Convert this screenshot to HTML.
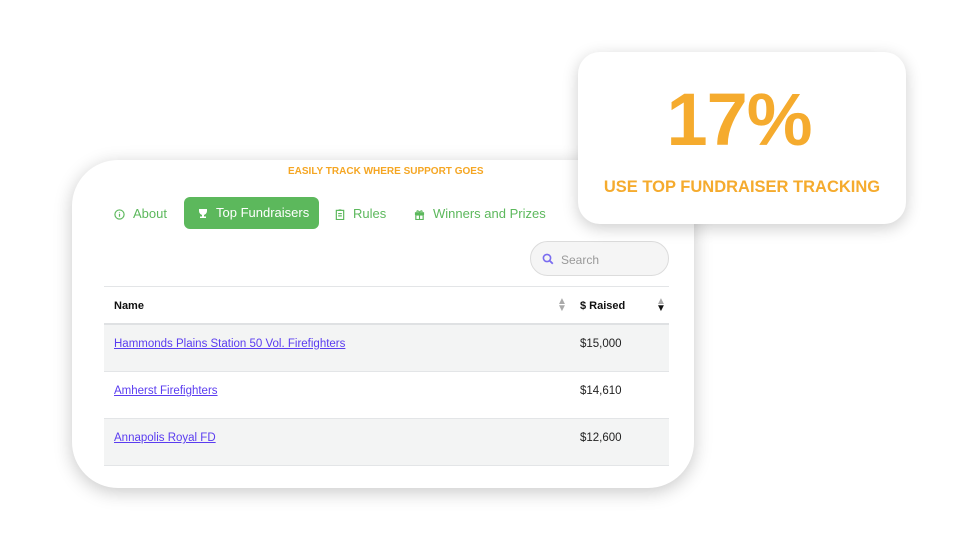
<!DOCTYPE html>
<html><head><meta charset="utf-8"><style>
*{margin:0;padding:0;box-sizing:border-box}
body{width:960px;height:559px;background:#fff;position:relative;overflow:hidden;font-family:"Liberation Sans",sans-serif}
.main{position:absolute;left:72px;top:160px;width:622px;height:328px;background:#fff;border-radius:46px;box-shadow:0 4px 18px rgba(0,0,0,.22)}
.stat{position:absolute;left:578px;top:52px;width:328px;height:172px;background:#fff;border-radius:22px;box-shadow:0 4px 16px rgba(0,0,0,.2)}
.abs{position:absolute;white-space:nowrap}
.tab{position:absolute;top:198px;height:32px;line-height:32px;color:#5cb85c;font-size:13px}
.tab svg{vertical-align:-2px;margin-right:8px}
.row{position:absolute;left:104px;width:565px;height:47px;border-bottom:1px solid #e3e5e7}
.row a{position:absolute;left:10px;top:13px;color:#5a3cf0;font-size:11.5px;text-decoration:underline}
.row span{position:absolute;left:476px;top:13px;color:#222;font-size:11.5px}
</style></head><body>
<div class="main"></div>
<div class="abs" style="left:288px;top:166px;color:#f5a623;font-size:10px;font-weight:bold">EASILY TRACK WHERE SUPPORT GOES</div>
<div class="tab" style="left:114px"><svg width="11" height="11" viewBox="0 0 12 12"><circle cx="6" cy="6" r="5" fill="none" stroke="#5cb85c" stroke-width="1.3"/><path d="M6 5.2v3.2M6 3.3v.6" stroke="#5cb85c" stroke-width="1.3"/></svg>About</div>
<div class="tab" style="left:184px;top:197px;width:135px;background:#5cb85c;color:#fff;border-radius:6px;padding-left:14px"><svg width="10" height="11" viewBox="0 0 10 11"><path d="M1 1h8v2a4 4 0 0 1-8 0z M4 6.5h2v2h2v1.5h-6v-1.5h2z" fill="#fff"/></svg>Top Fundraisers</div>
<div class="tab" style="left:335px"><svg width="10" height="11" viewBox="0 0 10 12"><rect x="1" y="1.5" width="8" height="10" fill="none" stroke="#5cb85c" stroke-width="1.3"/><path d="M3 5h4M3 7.5h4M3.5 1h3" stroke="#5cb85c" stroke-width="1.3"/></svg>Rules</div>
<div class="tab" style="left:414px"><svg width="11" height="11" viewBox="0 0 12 12"><rect x="1" y="3.5" width="10" height="3" fill="#5cb85c"/><rect x="2" y="6.5" width="8" height="5" fill="none" stroke="#5cb85c" stroke-width="1.3"/><path d="M6 3.5v8M6 3.5C4 1 2.5 2 3.5 3.5M6 3.5C8 1 9.5 2 8.5 3.5" stroke="#5cb85c" stroke-width="1.2" fill="none"/></svg>Winners and Prizes</div>
<div class="abs" style="left:530px;top:241px;width:139px;height:35px;border:1px solid #dcdcdc;border-radius:18px;background:#f5f5f5"></div>
<svg class="abs" style="left:542px;top:253px" width="12" height="12" viewBox="0 0 12 12"><circle cx="5" cy="5" r="3.6" fill="none" stroke="#7a6cf0" stroke-width="1.6"/><path d="M7.6 7.6l3.2 3.2" stroke="#7a6cf0" stroke-width="1.8"/></svg>
<div class="abs" style="left:561px;top:253px;color:#999;font-size:12px">Search</div>
<div class="abs" style="left:104px;top:286px;width:565px;height:39px;border-top:1px solid #e3e5e7;border-bottom:2px solid #dfe1e3"></div>
<div class="abs" style="left:114px;top:300px;font-size:11px;font-weight:bold;color:#111">Name</div>
<div class="abs" style="left:557px;top:298px;font-size:10px;line-height:7px;color:#aaa">▲<br>▼</div>
<div class="abs" style="left:580px;top:300px;font-size:11px;font-weight:bold;color:#111">$ Raised</div>
<div class="abs" style="left:656px;top:298px;font-size:10px;line-height:7px;color:#aaa">▲<br><span style="color:#111">▼</span></div>
<div class="row" style="top:325px;background:#f3f4f4"><a>Hammonds Plains Station 50 Vol. Firefighters</a><span>$15,000</span></div>
<div class="row" style="top:372px"><a>Amherst Firefighters</a><span>$14,610</span></div>
<div class="row" style="top:419px;background:#f3f4f4"><a>Annapolis Royal FD</a><span>$12,600</span></div>
<div class="stat"></div>
<div class="abs" style="left:575px;width:328px;text-align:center;top:80px;color:#f5ab2e;font-size:74px;font-weight:bold;letter-spacing:-1px;line-height:80px">17%</div>
<div class="abs" style="left:578px;width:328px;text-align:center;top:178px;color:#f5ab2e;font-size:16.5px;font-weight:bold">USE TOP FUNDRAISER TRACKING</div>
</body></html>
